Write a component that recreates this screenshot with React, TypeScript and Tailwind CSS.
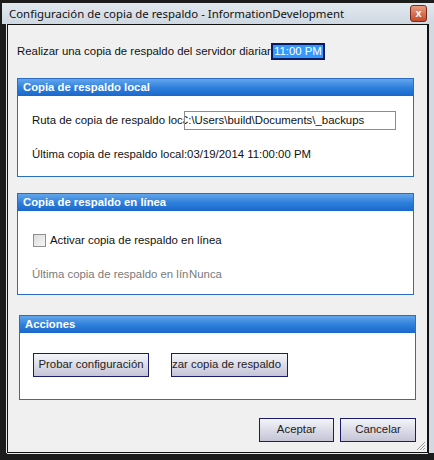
const body = { fontFamily: '"Liberation Sans", Arial, sans-serif' };

function Section({ title, className, children }: { title: string; className: string; children: React.ReactNode }) {
  return (
    <div className={`flex flex-col border border-[#2b6cc4] bg-white ${className}`}>
      <div className="h-[17px] shrink-0 bg-gradient-to-b from-[#62a6ec] via-[#2f80dc] to-[#1a67cc] pl-[5px] text-[11.3px] font-bold leading-[17px] text-white">
        {title}
      </div>
      <div className="flex-1">{children}</div>
    </div>
  );
}

function Btn({ children, className }: { children: React.ReactNode; className: string }) {
  return (
    <div className={`flex h-[24px] items-center overflow-hidden whitespace-nowrap border border-[#1b1b6b] bg-gradient-to-b from-[#f4f4fa] to-[#c4c4d6] text-[11.4px] text-[#222] ${className}`}>
      {children}
    </div>
  );
}

export default function App() {
  return (
    <div className="flex h-[460px] w-[434px] flex-col overflow-hidden bg-[#1c1c1c] pt-[3px]" style={body}>
      {/* title bar */}
      <div className="ml-[2px] flex h-[21px] shrink-0 items-center justify-between bg-gradient-to-b from-[#e2e8ef] to-[#cfd8e2] pl-[7px] pr-[7px]">
        <span className="text-[11.4px] text-[#111]" style={{ fontFamily: '"Noto Sans", sans-serif' }}>
          Configuración de copia de respaldo - InformationDevelopment
        </span>
        <div className="flex h-[17px] w-[17px] items-center justify-center rounded-[3px] border border-[#7a2a1a] bg-gradient-to-b from-[#e99a80] to-[#c44a28] text-[11px] font-bold leading-none text-white">
          x
        </div>
      </div>

      <div className="flex h-[429px] shrink-0">
        <div className="w-[7px] shrink-0 border-r border-[#e8e8e8] bg-[#1c1c1c]" />
        {/* content panel */}
        <div className="relative flex w-[421px] shrink-0 flex-col border border-[#111] bg-[#f0f0f0]">
          <div className="ml-[9px] mt-[18px] flex h-[17px] items-center text-[11.4px] text-[#111]">
            <span>Realizar una copia de respaldo del servidor diariar</span>
            <span className="flex h-[17px] items-center border-2 border-[#0a1a5c] bg-[#3399ff] px-px text-white">11:00 PM</span>
          </div>

          <Section title="Copia de respaldo local" className="ml-[9px] mt-[18px] h-[99px] w-[397px]">
            <div className="ml-[14px] mt-[15px] flex h-[19px] items-center text-[11.4px] text-[#111]">
              <span className="w-[152px] overflow-hidden whitespace-nowrap">Ruta de copia de respaldo local:</span>
              <div className="flex h-[19px] w-[212px] items-center overflow-hidden border border-[#8c8c8c] bg-white">
                <span className="-ml-[5px] whitespace-nowrap">C:\Users\build\Documents\_backups</span>
              </div>
            </div>
            <div className="ml-[14px] mt-[16px] text-[11.4px] text-[#111]">
              Última copia de respaldo local:03/19/2014 11:00:00 PM
            </div>
          </Section>

          <Section title="Copia de respaldo en línea" className="ml-[9px] mt-[16px] h-[102px] w-[397px]">
            <div className="ml-[15px] mt-[21px] flex items-center text-[11.4px] text-[#111]">
              <div className="h-[13px] w-[13px] border border-[#8e8f8f] bg-gradient-to-br from-[#dcdcdc] to-[#f6f6f6]" />
              <span className="ml-[4px]">Activar copia de respaldo en línea</span>
            </div>
            <div className="ml-[14px] mt-[17px] flex text-[11.4px] text-[#7a7a7a]">
              <span className="w-[157px] overflow-hidden whitespace-nowrap">Última copia de respaldo en línea:</span>
              <span>Nunca</span>
            </div>
          </Section>

          <Section title="Acciones" className="ml-[11px] mt-[20px] h-[85px] w-[397px]">
            <div className="ml-[13px] mt-[20px] flex gap-[22px]">
              <Btn className="w-[116px] justify-center">Probar configuración</Btn>
              <Btn className="w-[117px] justify-end pr-[6px]">Realizar copia de respaldo</Btn>
            </div>
          </Section>

          <div className="mr-[11px] mt-[18px] flex justify-end gap-[6px]">
            <Btn className="w-[75px] justify-center">Aceptar</Btn>
            <Btn className="w-[76px] justify-center">Cancelar</Btn>
          </div>

          <svg className="absolute bottom-[1px] right-[1px]" width="11" height="11" viewBox="0 0 11 11">
            <path d="M10 2 L2 10 M10 5 L5 10 M10 8 L8 10" stroke="#9a9a9a" strokeWidth="1" />
          </svg>
        </div>
        <div className="w-[6px] shrink-0 border-l border-[#111] bg-[#d3d9e0]" />
      </div>
      <div className="ml-[7px] h-px w-[421px] bg-[#e8e8e8]" />
    </div>
  );
}
